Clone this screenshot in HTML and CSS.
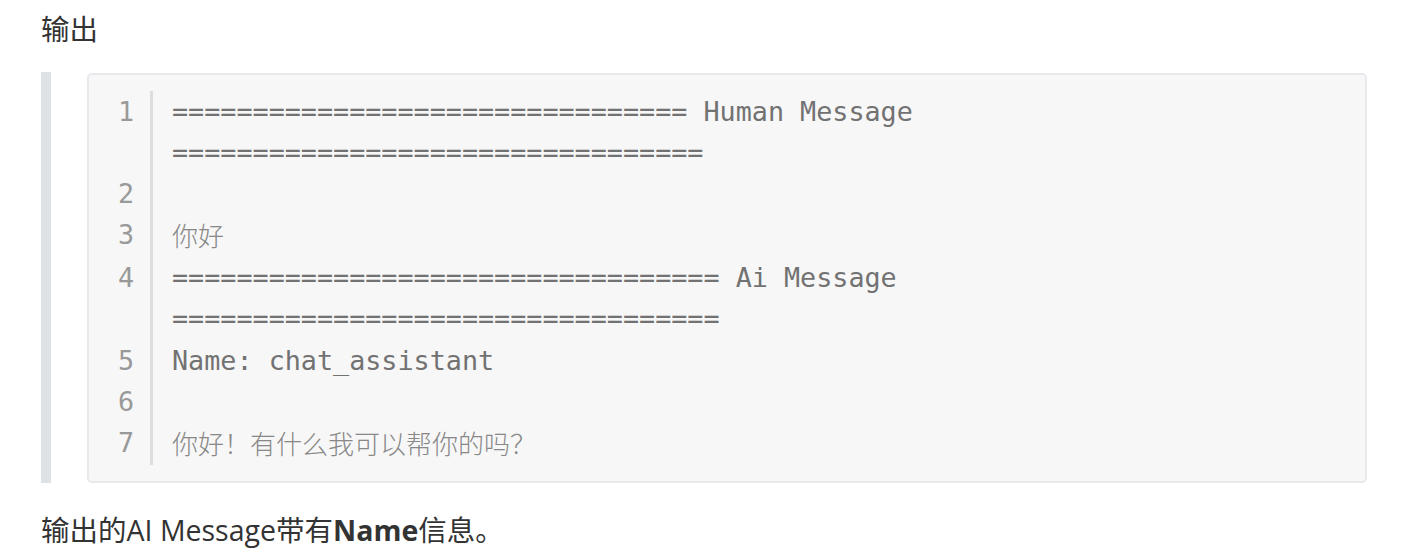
FILE: index.html
```html
<!DOCTYPE html>
<html lang="zh">
<head>
<meta charset="utf-8">
<title>输出</title>
<link rel="stylesheet" href="styles.css">
</head>
<body>
<main class="page">
  <p class="para first">输出</p>
  <blockquote class="quote">
    <div class="code-box">
      <div class="code-grid">
        <div class="ln">1</div><div class="code">================================ Human Message =================================</div>
        <div class="ln">2</div><div class="code"> </div>
        <div class="ln">3</div><div class="code"><span class="cjk">你好</span></div>
        <div class="ln">4</div><div class="code">================================== Ai Message ==================================</div>
        <div class="ln">5</div><div class="code">Name: chat_assistant</div>
        <div class="ln">6</div><div class="code"> </div>
        <div class="ln">7</div><div class="code"><span class="cjk">你好！有什么我可以帮你的吗？</span></div>
      </div>
    </div>
  </blockquote>
  <p class="para last">输出的AI Message带有<strong>Name</strong>信息。</p>
</main>
</body>
</html>
```

FILE: styles.css
```css
html, body {
  margin: 0;
  padding: 0;
  background: #ffffff;
}

.page {
  padding: 0 49px 0 41px;
  font-family: "Open Sans", "Noto Sans CJK SC", sans-serif;
  color: #333333;
}

.para {
  margin: 0;
  font-size: 28.5px;
  line-height: 44px;
}

.para.first {
  margin-top: 7px;
}

.para.last {
  margin-top: 25px;
}

.para strong {
  font-weight: 700;
}

.quote {
  margin: 21px 0 0 0;
  padding: 1px 0 0 36px;
  border-left: 10px solid #dfe2e5;
}

.code-box {
  background: #f7f7f7;
  border: 2px solid #e7e9ec;
  border-radius: 5px;
  padding: 16px 20px 16px 0;
}

.code-grid {
  display: grid;
  grid-template-columns: 64px 1fr;
  font-family: "DejaVu Sans Mono", "Noto Sans CJK SC", monospace;
  font-size: 26.75px;
  line-height: 41.1px;
}

.ln {
  box-sizing: border-box;
  text-align: right;
  padding-right: 16px;
  border-right: 3px solid #dddddd;
  color: #999999;
}

.code {
  padding-left: 19px;
  color: #727272;
  white-space: pre-wrap;
  min-width: 0;
}

.cjk {
  font-family: "Noto Sans CJK SC", sans-serif;
  font-size: 26px;
  color: #888888;
  font-weight: 300;
}
```
